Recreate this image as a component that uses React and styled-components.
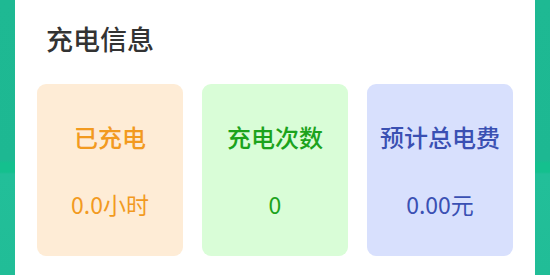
import React from 'react'
import styled, { createGlobalStyle } from 'styled-components';

const GlobalStyle = createGlobalStyle`
    html, body {
        margin: 0;
        padding: 0;
        height: 100%;
    }
    body {
        font-family: "Noto Sans CJK SC", "Noto Sans", sans-serif;
        background-color: #1fba94;
        background-image: linear-gradient(180deg,
            #1eb993 0px, #1db892 160px, #14c08e 163px, #14c08e 172px,
            #22bf99 174px, #21bd97 275px);
    }
    #root {
        height: 100%;
    }
`;

// 统计卡片数据
const stats = [
    { label: '已充电', value: '0.0小时', bg: '#feecd6', color: '#f29a1f' },
    { label: '充电次数', value: '0', bg: '#d9fdd7', color: '#1ca31c' },
    { label: '预计总电费', value: '0.00元', bg: '#d8e0fd', color: '#3a50b3' },
];

const App = () => {
  return (
    <>
    <GlobalStyle/>
    <StPage>
        <StPanel>
            <StTitle>充电信息</StTitle>
            <StCards>
                {stats.map((item, index) => {
                    return (
                        <StCard key={index} bg={item.bg} color={item.color}>
                            <StLabel>{item.label}</StLabel>
                            <StValue>{item.value}</StValue>
                        </StCard>
                    )
                })}
            </StCards>
        </StPanel>
    </StPage>
    </>
  )
}

const StValue = styled.div`
    font-size: 23px;
    line-height: 23px;
    font-weight: 400;
`;

const StLabel = styled.div`
    font-size: 24px;
    line-height: 24px;
    font-weight: 500;
`;

const StCard = styled.div`
    display: flex;
    flex-direction: column;
    align-items: center;
    gap: 44px;
    height: 172px;
    box-sizing: border-box;
    padding: 41px 0 0 0;
    border-radius: 9px;
    background-color: ${props => props.bg};
    color: ${props => props.color};
`;

const StCards = styled.div`
    display: grid;
    grid-template-columns: repeat(3, 146px);
    column-gap: 19px;
`;

const StTitle = styled.div`
    margin: 0 0 32px 9px;
    font-size: 27px;
    line-height: 27px;
    font-weight: 500;
    color: #333333;
`;

const StPanel = styled.div`
    display: flex;
    flex-direction: column;
    width: 520px;
    height: 100%;
    box-sizing: border-box;
    padding: 25px 22px 0 22px;
    background-color: #ffffff;
`;

const StPage = styled.div`
    display: flex;
    justify-content: center;
    height: 100%;
`;

export default App
